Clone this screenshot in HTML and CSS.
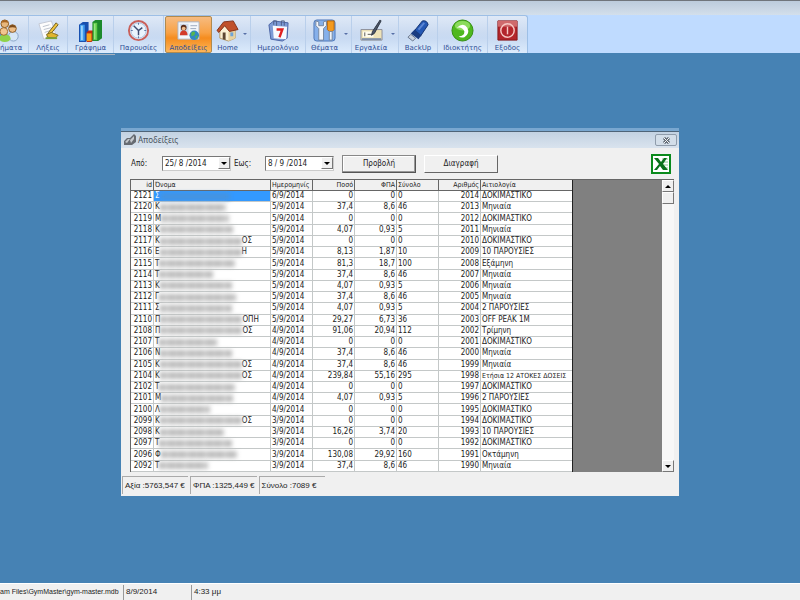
FILE: index.html
```html
<!DOCTYPE html>
<html lang="el">

<head>
    <meta charset="UTF-8">
    <title>GymMaster</title>
    <link rel="stylesheet" href="styles.css">
</head>

<body>
    <div class="caption"></div>

    <header class="ribbon">
        <nav class="toolbar">
            <button class="tool first">
                <svg viewBox="0 0 24 24">
                    <ellipse cx="2" cy="17" rx="6" ry="5" fill="#4a8fe0" />
                    <circle cx="5" cy="5" r="4" fill="#e7b77c" stroke="#8a5a22" />
                    <path d="M1 4q4-6 8 0-4-1-8 0" fill="#a8641e" />
                    <ellipse cx="14" cy="18" rx="5" ry="5" fill="#d6e6f6" stroke="#8aa6c8" />
                    <circle cx="13" cy="10" r="4" fill="#edbd86" stroke="#8a5a22" />
                    <path d="M9 9q4-6 8 0-4-1-8 0" fill="#7b4a1a" />
                    <ellipse cx="5" cy="20" rx="6" ry="4" fill="#8fd24a" />
                    <circle cx="4" cy="13" r="4" fill="#f0c590" stroke="#a06b2b" />
                </svg>
                <span>ήματα</span>
            </button>
            <button class="tool">
                <svg viewBox="0 0 24 24">
                    <path d="M2 5l13-3 5 15-13 4z" fill="#fdfdfd" stroke="#c3c9d4" />
                    <path d="M6 8l7-2M7 11l8-2M8 14l6-2" stroke="#b9c0cc" />
                    <path d="M20 4l2 2-8 10-3 1 1-3z" fill="#f2c53d" stroke="#6b5a1c" />
                    <path d="M10 16l5-2 7 3-3 3-8-1z" fill="#e0b52e" stroke="#7d6a22" />
                    <path d="M9 20h12" stroke="#7aa23a" stroke-width="2" />
                </svg>
                <span>Λήξεις</span>
            </button>
            <button class="tool">
                <svg viewBox="0 0 24 24">
                    <path d="M0 6l4-3h6v18l-3 3H0z" fill="#174fae" />
                    <path d="M1 6h5v17H1z" fill="#3f9bee" />
                    <path d="M2 7h2v15H2z" fill="#9bd4fb" />
                    <path d="M8 14l2-2h6v9l-3 3H8z" fill="#c22d12" />
                    <path d="M8 15h5v8H8z" fill="#f6a41c" />
                    <path d="M14 3l3-2h7v19l-4 3h-6z" fill="#1c8a2c" />
                    <path d="M15 4h4v18h-4z" fill="#5fcc4a" />
                    <path d="M16 5h1v16h-1z" fill="#b8f3a0" />
                </svg>
                <span>Γράφημα</span>
            </button>
            <button class="tool">
                <svg viewBox="0 0 24 24">
                    <circle cx="12" cy="12" r="10" fill="#eaf4fd" stroke="#c9605a" stroke-width="2" />
                    <circle cx="12" cy="12" r="8" fill="none" stroke="#a8bfdd" />
                    <path d="M12 4v2M12 18v2M4 12h2M18 12h2" stroke="#5c77a3" />
                    <path d="M7 7l5 5 4-3M12 12v5" fill="none" stroke="#3c4c72" stroke-width="1.5" />
                </svg>
                <span>Παρουσίες</span>
            </button>
            <button class="tool active">
                <svg viewBox="0 0 24 24">
                    <path d="M1 3h22v18H1z" fill="#f4f7fb" stroke="#aab4c4" />
                    <path d="M3 5h9v12H3z" fill="#cfdced" />
                    <circle cx="7" cy="9" r="3" fill="#5b2f1d" />
                    <circle cx="7" cy="10" r="2" fill="#efbd8d" />
                    <path d="M3 17q0-5 4-5t4 5z" fill="#d33a2a" />
                    <path d="M14 7h7M14 10h6" stroke="#9aa8bd" />
                    <circle cx="18" cy="17" r="5" fill="#3388c4" />
                    <path d="M15 14q3-2 4 0l-1 3-3 1zM19 18l3-1-2 4z" fill="#57b64d" />
                </svg>
                <span>Αποδείξεις</span>
            </button>
            <button class="tool drop">
                <svg viewBox="0 0 24 24">
                    <path d="M4 12l8-8 8 7v9l-7 3-9-3z" fill="#fbf0d4" stroke="#b49a6a" />
                    <path d="M13 13l7-3v10l-7 3z" fill="#e8d2a0" />
                    <path d="M1 12L8 3l10-1 5 9-9 2-5-6-6 7z" fill="#c0512b" stroke="#83321a" />
                    <path d="M7 14h3v8l-3-1z" fill="#5c4632" />
                    <path d="M15 14h3v4h-3z" fill="#6ea4d8" />
                </svg>
                <span>Home</span>
            </button>
            <button class="tool">
                <svg viewBox="0 0 24 24">
                    <path d="M2 6l5-4 15 2-1 16-5 3L4 21z" fill="#7d9bd6" stroke="#4a63a4" />
                    <path d="M6 7l15 1-1 13-13-1z" fill="#f6f9fe" />
                    <path d="M7 6V2h3v5M15 7V2h3v5" fill="none" stroke="#4c5d86" />
                    <path d="M10 11h6l-3 8" fill="none" stroke="#e02020" stroke-width="2.5" />
                </svg>
                <span>Ημερολόγιο</span>
            </button>
            <button class="tool drop">
                <svg viewBox="0 0 24 24">
                    <rect x="1" y="1" width="22" height="22" rx="3" fill="#86b0ea" stroke="#4e78b8" />
                    <path d="M3 2v5l3 3v12h5V10l3-3V2l-3 1v4H6V3z" fill="#f4f6fa" stroke="#75869f" />
                    <path d="M15 2h7v9l-2 2h-3l-2-2z" fill="#f49a1e" stroke="#b8660c" />
                    <path d="M17 13h3v9h-3z" fill="#eef2f7" stroke="#75869f" />
                </svg>
                <span>Θέματα</span>
            </button>
            <button class="tool drop">
                <svg viewBox="0 0 24 24">
                    <path d="M1 11h22v11H1z" fill="#eee3b8" stroke="#8b8e99" />
                    <path d="M3 13h11v6H3z" fill="#fffdf0" />
                    <path d="M5 14v4M8 16h4" stroke="#555" />
                    <path d="M21 1l1 1-7 13-3 2 1-4z" fill="#4c5668" stroke="#2e3644" />
                    <path d="M2 21h20" stroke="#7f8ea8" stroke-width="2" />
                </svg>
                <span>Εργαλεία</span>
            </button>
            <button class="tool">
                <svg viewBox="0 0 24 24">
                    <path d="M8 12L16 2q5-1 6 4l-8 12z" fill="#2458b4" stroke="#12306e" />
                    <path d="M12 11l6-7" stroke="#5b86d4" stroke-width="2" />
                    <path d="M8 11l7 6-3 4-8-6z" fill="#1a3c80" />
                    <path d="M4 16l5 4-3 3-5-4z" fill="#c9d2de" stroke="#66758c" />
                </svg>
                <span>BackUp</span>
            </button>
            <button class="tool">
                <svg viewBox="0 0 24 24">
                    <circle cx="12" cy="12" r="11" fill="#4fb81e" stroke="#338d10" />
                    <ellipse cx="12" cy="7" rx="8" ry="5" fill="#8bdb5c" />
                    <path d="M6 9q7-6 11 0 3 6-3 10-4 1-6-1 6 0 6-5-2-5-8-4z" fill="#fff" />
                </svg>
                <span>Ιδιοκτήτης</span>
            </button>
            <button class="tool">
                <svg viewBox="0 0 24 24">
                    <path d="M2 2h20v20H2z" fill="#b3262c" stroke="#86171b" />
                    <path d="M2 2h20v6H2z" fill="#cf6a6c" />
                    <circle cx="12" cy="12" r="7" fill="none" stroke="#f6c8c4" stroke-width="1.5" />
                    <path d="M12 8v8" stroke="#f6c8c4" stroke-width="1.5" />
                </svg>
                <span>Εξοδος</span>
            </button>
        </nav>
    </header>

    <main class="desktop">
        <div class="edge"></div>
        <section class="window">
            <div class="titlebar">
                <svg class="titleicon" viewBox="0 0 12 12">
                    <path d="M0 7l3-3h3l4-4 2 2v6l-4 3H0z" fill="#666b72" />
                    <path d="M1 8l3-3h2l-3 4zM6 6l4-4v3L7 9z" fill="#c5c9ce" />
                </svg>
                <h1>Αποδείξεις</h1>
                <button class="close" aria-label="Κλείσιμο">
                    <svg viewBox="0 0 9 7">
                        <path d="M2 1l5 5M7 1L2 6" stroke="#5d6670" stroke-width="3" />
                        <path d="M2 1l5 5M7 1L2 6" stroke="#f4f6f8" />
                    </svg>
                </button>
            </div>

            <form class="filters">
                <label for="from">Από:</label>
                <div class="picker">
                    <input id="from" type="text" value="25/ 8 /2014">
                    <button type="button" class="arrow down" aria-label="Από, ημερολόγιο"></button>
                </div>
                <label for="to">Εως:</label>
                <div class="picker">
                    <input id="to" type="text" value="8 / 9 /2014">
                    <button type="button" class="arrow down" aria-label="Εως, ημερολόγιο"></button>
                </div>
                <button type="button" class="push default">Προβολή</button>
                <button type="button" class="push">Διαγραφή</button>
                <button type="button" class="excel" aria-label="Excel">
                    <svg viewBox="0 0 20 20">
                        <path d="M1 1h18v18H1z" fill="#fff" stroke="#0a8a1c" stroke-width="2" />
                        <path d="M11 5h6M12 8h5M12 11h5M11 14h6" stroke="#8cc894" />
                        <path d="M3 4h4l3 4 3-4h3l-4 6 5 6h-5l-3-4-3 4H3l5-6z" fill="#08701a" />
                    </svg>
                </button>
            </form>

            <div class="grid">
                <table>
                    <colgroup>
                        <col class="c-id">
                        <col class="c-name">
                        <col class="c-num">
                        <col class="c-num">
                        <col class="c-num">
                        <col class="c-num">
                        <col class="c-num">
                        <col class="c-desc">
                    </colgroup>
                    <thead>
                        <tr>
                            <th class="num">id</th>
                            <th>Όνομα</th>
                            <th>Ημερομηνίς</th>
                            <th class="num">Ποσό</th>
                            <th class="num">ΦΠΑ</th>
                            <th>Σύνολο</th>
                            <th class="num">Αριθμός</th>
                            <th>Αιτιολογία</th>
                        </tr>
                    </thead>
                    <tbody></tbody>
                </table>
                <div class="scrollbar">
                    <button class="arrow up" aria-label="Πάνω"></button>
                    <div class="thumb"></div>
                    <button class="arrow down" aria-label="Κάτω"></button>
                </div>
            </div>

            <footer class="totals">
                <span>Αξία :5763,547 €</span>
                <span>ΦΠΑ :1325,449 €</span>
                <span>Σύνολο :7089 €</span>
            </footer>
        </section>
    </main>

    <footer class="status">
        <span class="path">am Files\GymMaster\gym-master.mdb</span>
        <span>8/9/2014</span>
        <span>4:33 μμ</span>
    </footer>

    <script src="script.js"></script>
</body>

</html>
```
FILE: styles.css
```css
* {
    box-sizing: border-box;
}

body {
    margin: 0;
    height: 100vh;
    display: flex;
    flex-direction: column;
    overflow: hidden;
    background-color: #4682b4;
    font: 8px/10px "DejaVu Sans Condensed", "DejaVu Sans", sans-serif;
    color: #222;
}

button,
input {
    font: inherit;
    color: inherit;
    margin: 0;
    padding: 0;
}

.caption {
    height: 15px;
    flex: none;
    border-top: 1px solid #70757c;
    background: linear-gradient(#bccbdc, #d3dfeb);
}

/* toolbar */
.ribbon {
    flex: none;
    background-color: #bfdbff;
}

.toolbar {
    display: grid;
    grid-template-columns: 29px 39px 46px 50px 49px 38px 55px 46px 47px 39px 50px 39px;
    width: max-content;
    height: 38px;
    border-top: 1px solid #9dbfe6;
    border-right: 1px solid #9dbfe6;
    border-radius: 0 3px 0 0;
    background: linear-gradient(#dfe9f7, #cbdbf1 45%, #c8daf2 60%, #dcebfc);
}

.tool {
    position: relative;
    display: flex;
    flex-direction: column;
    align-items: center;
    justify-content: space-between;
    padding: 3px 0 1px;
    border: 0;
    border-right: 1px solid #b9cfeb;
    background: none;
    font-family: "DejaVu Sans", sans-serif;
    font-size: 7px;
    line-height: 8px;
    color: #2f4f96;
    white-space: nowrap;
}

.tool svg {
    width: 23px;
    height: 23px;
}

.tool.first {
    align-items: flex-start;
}

.tool:last-child {
    border-right: 0;
}

.tool.active {
    margin: 0 1px;
    border: 1px solid #b08a4e;
    padding: 2px 0 0;
    border-radius: 2px;
    background: linear-gradient(#f6bb80, #f8a144 45%, #f58c1e 60%, #fdb659);
}

.tool.drop {
    padding-right: 8px;
}

.tool.drop::after {
    content: "";
    position: absolute;
    right: 3px;
    top: 17px;
    border: 2px solid transparent;
    border-top-color: #566fa6;
}

.desktop {
    position: relative;
    flex: 1;
}

.edge {
    width: 115px;
    height: 2px;
    border-bottom: 1px solid #a9b4c0;
}

/* child window */
.window {
    position: absolute;
    left: 121px;
    top: 75px;
    width: 558px;
    display: flex;
    flex-direction: column;
    border-top: 3px solid #79a7d0;
    background-color: #f0f0f0;
}

.titlebar {
    display: flex;
    align-items: center;
    gap: 2px;
    height: 17px;
    padding: 0 2px 0 3px;
    border-top: 1px solid #4e6478;
    background: linear-gradient(#c3d2e2, #d9e3ee);
}

.titleicon {
    width: 12px;
    height: 12px;
}

.titlebar h1 {
    flex: 1;
    margin: 0;
    font: 8px/10px "Noto Sans", sans-serif;
    color: #4a5560;
}

.close {
    width: 22px;
    height: 12px;
    display: flex;
    justify-content: center;
    align-items: center;
    border: 1px solid #8f9cab;
    border-radius: 2px;
    background-color: #d3dee9;
}

.close svg {
    width: 9px;
    height: 7px;
}

.filters {
    display: flex;
    align-items: center;
    height: 31px;
    padding: 0 8px 0 10px;
}

.filters label {
    width: 31px;
}

.picker {
    display: flex;
    width: 69px;
    height: 15px;
    margin-right: 3px;
    border: 1px solid #777;
    border-right-color: #ccc;
    border-bottom-color: #ccc;
    background-color: #fff;
}

.picker input {
    flex: 1;
    min-width: 0;
    border: 0;
    padding-left: 2px;
    background: none;
}

.arrow {
    width: 12px;
    height: 12px;
    flex: none;
    display: flex;
    align-items: center;
    justify-content: center;
    border: 1px solid #fff;
    border-right-color: #777;
    border-bottom-color: #777;
    background-color: #f0f0f0;
}

.arrow::before {
    content: "";
    border: 3px solid transparent;
}

.arrow.down::before {
    border-top-color: #000;
    border-bottom: 0;
}

.arrow.up::before {
    border-bottom-color: #000;
    border-top: 0;
}

.push {
    width: 74px;
    height: 18px;
    margin-left: 8px;
    border: 1px solid #fff;
    border-right-color: #666;
    border-bottom-color: #666;
    background-color: #f0f0f0;
}

.push.default {
    margin-left: 5px;
    border: 1px solid #888;
    border-right-color: #555;
    border-bottom-color: #555;
    box-shadow: inset -1px -1px #999, inset 1px 1px #fff;
}

.excel {
    width: 20px;
    height: 20px;
    margin-left: auto;
    border: 0;
    background: none;
}

.excel svg {
    display: block;
    width: 20px;
    height: 20px;
}

/* records */
.grid {
    display: flex;
    justify-content: space-between;
    height: 293px;
    margin: 0 5px 0 9px;
    border: 1px solid #666;
    border-right: 0;
    border-bottom: 0;
    background-color: #808080;
}

table {
    width: 442px;
    height: 100%;
    table-layout: fixed;
    border-collapse: separate;
    border-spacing: 0;
    border-right: 1px solid #222;
    background-color: #fff;
}

.c-id {
    width: 23px;
}

.c-name {
    width: 117px;
}

.c-num {
    width: 42px;
}

th,
td {
    padding: 0 1px;
    border-right: 1px solid #c4c8c8;
    border-bottom: 1px solid #c4c8c8;
    white-space: nowrap;
    text-align: left;
    font-weight: normal;
}

th {
    border-color: #666;
    background-color: #f0f0f0;
    font-size: 7px;
}

th:last-child,
td:last-child {
    border-right: 0;
}

th.num,
td.num {
    text-align: right;
}

td.long {
    font-size: 7px;
}

.name {
    display: flex;
    align-items: center;
    height: 10px;
}

.smudge {
    height: 7px;
    background: repeating-linear-gradient(90deg, #b0b0b0 0, #ccc 7px, #b8b8b8 12px, #c8c8c8 19px);
    filter: blur(2px);
}

.selected .name {
    color: #fff;
}

.selected td:nth-child(2) {
    background-color: #3399ff;
}

.selected .smudge {
    background: #4593e0;
}

.scrollbar {
    width: 12px;
    display: flex;
    flex-direction: column;
    background-color: #f7f7f7;
}

.thumb {
    height: 12px;
    border: 1px solid #fff;
    border-right-color: #777;
    border-bottom-color: #777;
    background-color: #f0f0f0;
}

.scrollbar .down {
    margin-top: auto;
}

.totals {
    display: flex;
    gap: 2px;
    padding: 4px 1px 2px;
    font-family: "Liberation Sans", sans-serif;
}

.totals span {
    min-width: 66px;
    height: 18px;
    padding: 4px 2px 0;
    border-top: 1px solid #aaa;
    border-left: 1px solid #aaa;
}

.status {
    flex: none;
    display: flex;
    height: 17px;
    border-top: 1px solid #fff;
    background-color: #f0f0f0;
    font-family: "Liberation Sans", sans-serif;
}

.status span {
    width: 68px;
    margin-top: 1px;
    padding: 2px;
    border-left: 1px solid #999;
}

.status .path {
    width: 123px;
    padding: 2px 0;
    border-left: 0;
    font-size: 7px;
    white-space: nowrap;
}
```
FILE: script.js
```js
const tbody = document.querySelector("tbody");

// id, initial, hidden width, ending, date, amount, vat, total, number, reason
const rows = [
    [2121, "Σ", 70, "", "6/9/2014", "0", "0", "0", 2014, "ΔΟΚΙΜΑΣΤΙΚΟ"],
    [2120, "Κ", 66, "", "5/9/2014", "37,4", "8,6", "46", 2013, "Μηνιαία"],
    [2119, "Μ", 68, "", "5/9/2014", "0", "0", "0", 2012, "ΔΟΚΙΜΑΣΤΙΚΟ"],
    [2118, "Κ", 73, "", "5/9/2014", "4,07", "0,93", "5", 2011, "Μηνιαία"],
    [2117, "Κ", 82, "ΟΣ", "5/9/2014", "0", "0", "0", 2010, "ΔΟΚΙΜΑΣΤΙΚΟ"],
    [2116, "Ε", 82, "Η", "5/9/2014", "8,13", "1,87", "10", 2009, "10 ΠΑΡΟΥΣΙΕΣ"],
    [2115, "Τ", 76, "", "5/9/2014", "81,3", "18,7", "100", 2008, "Εξάμηνη"],
    [2114, "Τ", 54, "", "5/9/2014", "37,4", "8,6", "46", 2007, "Μηνιαία"],
    [2113, "Κ", 72, "", "5/9/2014", "4,07", "0,93", "5", 2006, "Μηνιαία"],
    [2112, "Γ", 77, "", "5/9/2014", "37,4", "8,6", "46", 2005, "Μηνιαία"],
    [2111, "Σ", 72, "", "5/9/2014", "4,07", "0,93", "5", 2004, "2 ΠΑΡΟΥΣΙΕΣ"],
    [2110, "Π", 82, "ΟΠΗ", "5/9/2014", "29,27", "6,73", "36", 2003, "OFF PEAK 1M"],
    [2108, "Π", 82, "ΟΣ", "4/9/2014", "91,06", "20,94", "112", 2002, "Τρίμηνη"],
    [2107, "Τ", 58, "", "4/9/2014", "0", "0", "0", 2001, "ΔΟΚΙΜΑΣΤΙΚΟ"],
    [2106, "Ν", 72, "", "4/9/2014", "37,4", "8,6", "46", 2000, "Μηνιαία"],
    [2105, "Κ", 82, "ΟΣ", "4/9/2014", "37,4", "8,6", "46", 1999, "Μηνιαία"],
    [2104, "Κ", 82, "ΟΣ", "4/9/2014", "239,84", "55,16", "295", 1998, "Ετήσια 12 ΑΤΟΚΕΣ ΔΟΣΕΙΣ"],
    [2102, "Τ", 76, "", "4/9/2014", "0", "0", "0", 1997, "ΔΟΚΙΜΑΣΤΙΚΟ"],
    [2101, "Μ", 72, "", "4/9/2014", "4,07", "0,93", "5", 1996, "2 ΠΑΡΟΥΣΙΕΣ"],
    [2100, "Λ", 50, "", "4/9/2014", "0", "0", "0", 1995, "ΔΟΚΙΜΑΣΤΙΚΟ"],
    [2099, "Κ", 82, "ΟΣ", "3/9/2014", "0", "0", "0", 1994, "ΔΟΚΙΜΑΣΤΙΚΟ"],
    [2098, "Κ", 64, "", "3/9/2014", "16,26", "3,74", "20", 1993, "10 ΠΑΡΟΥΣΙΕΣ"],
    [2097, "Τ", 73, "", "3/9/2014", "0", "0", "0", 1992, "ΔΟΚΙΜΑΣΤΙΚΟ"],
    [2096, "Φ", 76, "", "3/9/2014", "130,08", "29,92", "160", 1991, "Οκτάμηνη"],
    [2092, "Τ", 49, "", "3/9/2014", "37,4", "8,6", "46", 1990, "Μηνιαία"]
];

rows.forEach(([id, initial, hidden, ending, date, amount, vat, total, number, reason], i) => {
    const tr = document.createElement("tr");
    if (i == 0) {
        tr.classList.add("selected");
    }
    tr.innerHTML = `
        <td class="num">${id}</td>
        <td><div class="name"><span>${initial}</span><span class="smudge" style="width: ${hidden}px"></span><span>${ending}</span></div></td>
        <td>${date}</td>
        <td class="num">${amount}</td>
        <td class="num">${vat}</td>
        <td>${total}</td>
        <td class="num">${number}</td>
        <td>${reason}</td>`;
    if (reason.length > 20) {
        tr.lastElementChild.classList.add("long");
    }
    tbody.appendChild(tr);
});
```
